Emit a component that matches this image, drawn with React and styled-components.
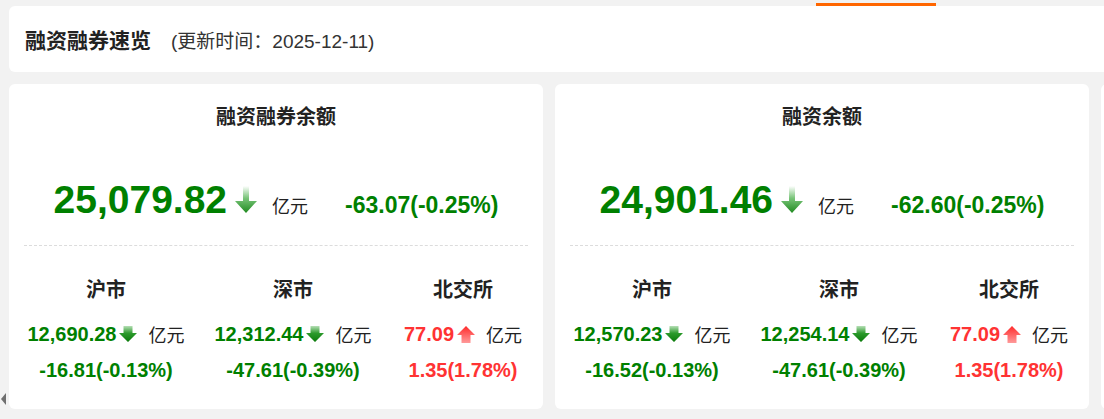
import React from "react";
import styled, { createGlobalStyle } from "styled-components";

const GlobalStyle = createGlobalStyle`
  html, body { margin: 0; padding: 0; background: #f2f2f2; overflow: hidden; }
  body { font-family: "Liberation Sans", "Noto Sans CJK SC", sans-serif; color: #222; }
`;

const GREEN = "#008000";
const RED = "#ff3333";

const Page = styled.div`
  position: relative;
  width: 1104px;
  height: 419px;
  padding-left: 9px;
  box-sizing: border-box;
  overflow: hidden;
`;

const TopStrip = styled.div`
  height: 6px;
  display: flex;
  align-items: flex-end;
`;

const TabIndicator = styled.div`
  margin-left: 807px;
  width: 120px;
  height: 3px;
  background: #f60;
`;

const HeaderCard = styled.div`
  width: 1120px;
  height: 66px;
  background: #fff;
  border-radius: 6px;
  display: flex;
  align-items: center;
  padding-left: 16px;
  box-sizing: border-box;
  gap: 20px;
`;

const HeaderTitle = styled.h1`
  margin: 0;
  font-size: 21px;
  font-weight: bold;
  color: #222;
`;

const HeaderSub = styled.span`
  font-size: 19px;
  color: #333;
`;

const CardRow = styled.div`
  display: flex;
  gap: 12px;
  margin-top: 12px;
`;

const Card = styled.section`
  flex: 0 0 534px;
  height: 325px;
  background: #fff;
  border-radius: 6px;
  padding: 0 15px;
  box-sizing: border-box;
  display: flex;
  flex-direction: column;
`;

const CardTitle = styled.h2`
  margin: 20px 0 0;
  line-height: 26px;
  font-size: 20px;
  font-weight: bold;
  text-align: center;
  color: #222;
`;

const MainRow = styled.div`
  margin-top: 48px;
  height: 44px;
  display: flex;
  align-items: baseline;
  justify-content: center;
`;

const BigNumber = styled.span`
  font-size: 39px;
  font-weight: bold;
  color: ${(p) => p.$color};
  line-height: 44px;
`;

const Unit = styled.span`
  font-size: 18px;
  color: #222;
  margin-left: ${(p) => p.$gap}px;
`;

const BigChange = styled.span`
  font-size: 23px;
  font-weight: bold;
  color: ${(p) => p.$color};
  margin-left: 37px;
`;

const BigArrowWrap = styled.span`
  align-self: center;
  margin-left: 8px;
  display: inline-flex;
  transform: translateY(-1px);
`;

const Divider = styled.div`
  margin-top: 23px;
  border-top: 1px dashed #dcdcdc;
`;

const MarketGrid = styled.div`
  display: grid;
  grid-template-columns: 164px 210px 130px;
`;

const MarketCol = styled.div`
  display: flex;
  flex-direction: column;
  align-items: center;
`;

const MarketLabel = styled.div`
  margin-top: 30px;
  line-height: 28px;
  font-size: 20px;
  font-weight: bold;
  color: #222;
`;

const ValueRow = styled.div`
  margin-top: 16px;
  height: 28px;
  display: flex;
  align-items: center;
  white-space: nowrap;
`;

const Value = styled.span`
  font-size: 20px;
  font-weight: bold;
  color: ${(p) => p.$color};
`;

const SmallArrowWrap = styled.span`
  display: inline-flex;
  margin-left: 3px;
`;

const ChangeRow = styled.div`
  margin-top: 8px;
  line-height: 28px;
  font-size: 20px;
  font-weight: bold;
  color: ${(p) => p.$color};
  white-space: nowrap;
`;

const PrevArrow = styled.div`
  position: absolute;
  left: 1px;
  top: 393px;
  width: 0;
  height: 0;
  border-top: 6px solid transparent;
  border-bottom: 6px solid transparent;
  border-right: 5px solid #6f6f6f;
`;

let gid = 0;

function BigArrow() {
  const id = `bigdown${gid++}`;
  return (
    <svg width="22" height="27" viewBox="0 0 22 27">
      <defs>
        <linearGradient id={id} x1="0" y1="0" x2="0" y2="1">
          <stop offset="0" stopColor="#ffffff" />
          <stop offset="0.45" stopColor="#79c479" />
          <stop offset="1" stopColor="#1f8a1f" />
        </linearGradient>
      </defs>
      <path d="M8 0 H14 V15 H22 L11 27 L0 15 H8 Z" fill={`url(#${id})`} />
    </svg>
  );
}

function SmallArrow({ up }) {
  const id = `small${gid++}`;
  if (up) {
    return (
      <svg width="18" height="17" viewBox="0 0 18 17">
        <defs>
          <linearGradient id={id} x1="0" y1="0" x2="0" y2="1">
            <stop offset="0" stopColor="#ff2a2a" />
            <stop offset="1" stopColor="#ff9a9a" />
          </linearGradient>
        </defs>
        <path d="M9 0 L18 9 H13.5 V17 H4.5 V9 H0 Z" fill={`url(#${id})`} />
      </svg>
    );
  }
  return (
    <svg width="18" height="16" viewBox="0 0 18 16">
      <defs>
        <linearGradient id={id} x1="0" y1="0" x2="0" y2="1">
          <stop offset="0" stopColor="#b6dfb6" />
          <stop offset="0.45" stopColor="#2c9a2c" />
          <stop offset="1" stopColor="#0a7a0a" />
        </linearGradient>
      </defs>
      <path d="M4.5 0 H13.5 V7 H18 L9 16 L0 7 H4.5 Z" fill={`url(#${id})`} />
    </svg>
  );
}

const cards = [
  {
    title: "融资融券余额",
    value: "25,079.82",
    change: "-63.07(-0.25%)",
    up: false,
    markets: [
      { name: "沪市", value: "12,690.28", change: "-16.81(-0.13%)", up: false },
      { name: "深市", value: "12,312.44", change: "-47.61(-0.39%)", up: false },
      { name: "北交所", value: "77.09", change: "1.35(1.78%)", up: true },
    ],
  },
  {
    title: "融资余额",
    value: "24,901.46",
    change: "-62.60(-0.25%)",
    up: false,
    markets: [
      { name: "沪市", value: "12,570.23", change: "-16.52(-0.13%)", up: false },
      { name: "深市", value: "12,254.14", change: "-47.61(-0.39%)", up: false },
      { name: "北交所", value: "77.09", change: "1.35(1.78%)", up: true },
    ],
  },
];

function SummaryCard({ data }) {
  const color = data.up ? RED : GREEN;
  return (
    <Card>
      <CardTitle>{data.title}</CardTitle>
      <MainRow>
        <BigNumber $color={color}>{data.value}</BigNumber>
        <BigArrowWrap>
          <BigArrow />
        </BigArrowWrap>
        <Unit $gap={15}>亿元</Unit>
        <BigChange $color={color}>{data.change}</BigChange>
      </MainRow>
      <Divider />
      <MarketGrid>
        {data.markets.map((m) => {
          const c = m.up ? RED : GREEN;
          return (
            <MarketCol key={m.name}>
              <MarketLabel>{m.name}</MarketLabel>
              <ValueRow>
                <Value $color={c}>{m.value}</Value>
                <SmallArrowWrap>
                  <SmallArrow up={m.up} />
                </SmallArrowWrap>
                <Unit $gap={11}>亿元</Unit>
              </ValueRow>
              <ChangeRow $color={c}>{m.change}</ChangeRow>
            </MarketCol>
          );
        })}
      </MarketGrid>
    </Card>
  );
}

export default function App() {
  return (
    <>
      <GlobalStyle />
      <Page>
        <TopStrip>
          <TabIndicator />
        </TopStrip>
        <HeaderCard>
          <HeaderTitle>融资融券速览</HeaderTitle>
          <HeaderSub>(更新时间：2025-12-11)</HeaderSub>
        </HeaderCard>
        <CardRow>
          {cards.map((c) => (
            <SummaryCard key={c.title} data={c} />
          ))}
          <Card aria-hidden="true" />
        </CardRow>
        <PrevArrow />
      </Page>
    </>
  );
}
